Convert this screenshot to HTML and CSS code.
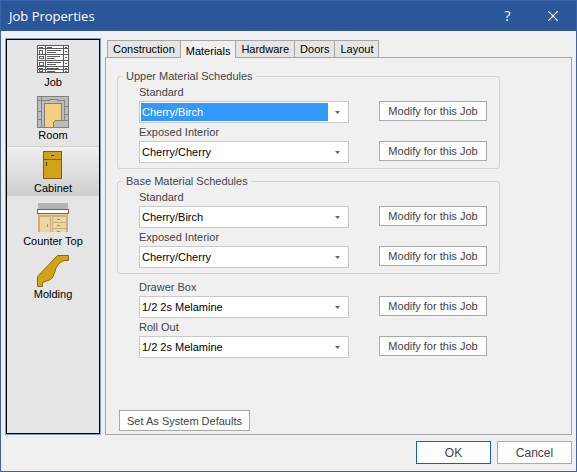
FILE: index.html
```html
<!DOCTYPE html>
<html lang="en">
<head>
<meta charset="utf-8">
<title>Job Properties</title>
<link rel="stylesheet" href="styles.css">
</head>
<body>
<div class="dialog">
  <header class="titlebar">
    <h1>Job Properties</h1>
    <button class="caption help" type="button" aria-label="Help">?</button>
    <button class="caption" type="button" aria-label="Close">
      <svg width="10" height="10" viewBox="0 0 10 10"><path d="M0 0L10 10M10 0L0 10" fill="none" stroke="#fff" stroke-width="1.2"/></svg>
    </button>
  </header>

  <div class="content">
    <nav class="sidebar">
      <button class="item" type="button">
        <svg width="32" height="32" viewBox="0 0 32 32" shape-rendering="crispEdges">
          <rect x="0.500" y="2.500" width="31" height="27" fill="#fff" stroke="#5c5c5c"/>
          <path d="M0 5.500H32M0 11.500H32M0 17.500H32M0 23.500H32M0 26.500H32M8.500 2V30M26.500 2V30M2 4.500H6M28 4.500H30M28 8.500H30M28 14.500H30M28 20.500H30M28 25.500H30M28 28.500H30M10 7.500H24M10 9.500H19M10 13.500H23M10 15.500H18M10 19.500H24M10 21.500H19M10 25.500H22M10 28.500H18M10 4.500H15" fill="none" stroke="#5c5c5c"/>
          <path d="M2.500 7.500H5.500V11.500H2.500ZM2.500 13.500H6.500V15.500H2.500ZM2.500 19.500H6.500V22.500H2.500ZM2.500 25.500H5.500V28.500H2.500Z" fill="none" stroke="#5c5c5c"/>
        </svg>
        <span>Job</span>
      </button>
      <button class="item" type="button">
        <svg width="32" height="32" viewBox="0 0 32 32" shape-rendering="crispEdges">
          <rect x="0.500" y="0.500" width="31" height="31" fill="#bcbcbc" stroke="#808080"/>
          <path d="M7.500 7.500H24.500V24.500H18.500L16.500 26.500V31.500H7.500Z" fill="#f2d080" stroke="#808080"/>
          <path d="M4.500 1V31M0 4.500H12V3.500H20V4.500H27.500V24M28 10.500H31M28 18.500H31M1 15.500H4M1 23.500H4M24 24.500H31" fill="none" stroke="#858585"/>
        </svg>
        <span>Room</span>
      </button>
      <button class="item selected" type="button" aria-current="page">
        <svg width="32" height="32" viewBox="0 0 32 32" shape-rendering="crispEdges">
          <rect x="6.500" y="2.500" width="18" height="27" fill="#d2a21b" stroke="#8b5a10"/>
          <path d="M6 10.500H25" stroke="#8b5a10"/>
          <path d="M14 6.500H17M9.500 13V17" stroke="#3c3020"/>
        </svg>
        <span>Cabinet</span>
      </button>
      <button class="item" type="button">
        <svg width="32" height="32" viewBox="0 0 32 32" shape-rendering="crispEdges">
          <path d="M1 1H31V7H1Z" fill="#b3b3b3"/>
          <path d="M1 12H31V30H1Z" fill="#ecd89f"/>
          <path d="M1.500 12V30M30.500 12V30M1 13.500H31M2.500 30V14.500H13.500V30M15.500 30V14.500H29.500V30M15 20.500H30M15 26.500H30" fill="none" stroke="#c9ae85"/>
          <path d="M20 17.500H23M20 23.500H23M20 29.500H23M10.500 22V25" stroke="#8e8e8e"/>
          <rect x="0.500" y="7.500" width="31" height="4" fill="#fff" stroke="#d33c22"/>
        </svg>
        <span>Counter Top</span>
      </button>
      <button class="item" type="button">
        <svg width="32" height="32" viewBox="0 0 32 32">
          <path d="M20.500 0.500H31.500V5.500H27Q19.500 8 17.500 18L15.500 22.500L13.500 24.500L5.500 27.500V31.500H0.500V21.500Z" fill="#d2a21b" stroke="#956510"/>
        </svg>
        <span>Molding</span>
      </button>
    </nav>

    <main class="pages">
      <div class="tabs" role="tablist">
        <button class="tab" type="button" role="tab">Construction</button>
        <button class="tab active" type="button" role="tab" aria-selected="true">Materials</button>
        <button class="tab" type="button" role="tab">Hardware</button>
        <button class="tab" type="button" role="tab">Doors</button>
        <button class="tab" type="button" role="tab">Layout</button>
      </div>
      <section class="panel" role="tabpanel">
        <fieldset class="group">
          <legend>Upper Material Schedules</legend>
          <div class="field">
            <label for="upper-standard">Standard</label>
            <div class="combo focused"><select id="upper-standard"><option>Cherry/Birch</option></select><svg class="arrow" viewBox="0 0 5 3"><path d="M0 0H5L2.500 3Z"/></svg></div>
            <button class="btn" type="button">Modify for this Job</button>
          </div>
          <div class="field">
            <label for="upper-interior">Exposed Interior</label>
            <div class="combo"><select id="upper-interior"><option>Cherry/Cherry</option></select><svg class="arrow" viewBox="0 0 5 3"><path d="M0 0H5L2.500 3Z"/></svg></div>
            <button class="btn" type="button">Modify for this Job</button>
          </div>
        </fieldset>
        <fieldset class="group">
          <legend>Base Material Schedules</legend>
          <div class="field">
            <label for="base-standard">Standard</label>
            <div class="combo"><select id="base-standard"><option>Cherry/Birch</option></select><svg class="arrow" viewBox="0 0 5 3"><path d="M0 0H5L2.500 3Z"/></svg></div>
            <button class="btn" type="button">Modify for this Job</button>
          </div>
          <div class="field">
            <label for="base-interior">Exposed Interior</label>
            <div class="combo"><select id="base-interior"><option>Cherry/Cherry</option></select><svg class="arrow" viewBox="0 0 5 3"><path d="M0 0H5L2.500 3Z"/></svg></div>
            <button class="btn" type="button">Modify for this Job</button>
          </div>
        </fieldset>
        <div class="extras">
          <div class="field">
            <label for="drawer-box">Drawer Box</label>
            <div class="combo"><select id="drawer-box"><option>1/2 2s Melamine</option></select><svg class="arrow" viewBox="0 0 5 3"><path d="M0 0H5L2.500 3Z"/></svg></div>
            <button class="btn" type="button">Modify for this Job</button>
          </div>
          <div class="field">
            <label for="roll-out">Roll Out</label>
            <div class="combo"><select id="roll-out"><option>1/2 2s Melamine</option></select><svg class="arrow" viewBox="0 0 5 3"><path d="M0 0H5L2.500 3Z"/></svg></div>
            <button class="btn" type="button">Modify for this Job</button>
          </div>
        </div>
        <button class="btn defaults" type="button">Set As System Defaults</button>
      </section>
    </main>
  </div>

  <footer class="actions">
    <button class="btn primary" type="button">OK</button>
    <button class="btn" type="button">Cancel</button>
  </footer>
</div>
</body>
</html>
```
FILE: styles.css
```css
* { box-sizing: border-box; }

body {
  margin: 0;
  font: 11px/14px "Liberation Sans", Arial, sans-serif;
  color: #444;
}

button, select {
  margin: 0;
  padding: 0;
  border: 0;
  border-radius: 0;
  background: none;
  font: inherit;
  color: inherit;
  white-space: nowrap;
}

.dialog {
  display: flex;
  flex-direction: column;
  min-height: 100vh;
  border: 1px solid #3c64a8;
  background: #f0f0f0;
}

.titlebar {
  display: flex;
  align-items: center;
  height: 30px;
  padding: 0 1px 0 8px;
  background: #2b579a;
  color: #fff;
}

.titlebar h1 {
  flex: 1;
  margin: 0;
  font: 13px/18px "Open Sans", sans-serif;
}

.caption {
  display: grid;
  place-items: center;
  width: 45px;
  height: 28px;
}

.help { font: 14px/18px "Open Sans", sans-serif; }

.content {
  flex: 1;
  display: flex;
  gap: 4px;
  padding: 7px 4px 0;
}

.sidebar {
  display: flex;
  flex-direction: column;
  gap: 3px;
  flex: 0 0 96px;
  border: 1px solid #78a0c0;
  box-shadow: inset 0 0 0 1px #000;
  background: #e5e5e5;
  color: #000;
}

.item {
  display: flex;
  flex-direction: column;
  align-items: center;
  height: 50px;
  margin: 0 1px;
  padding-top: 3px;
}

.item:first-child { margin-top: 1px; }

.item svg { flex: none; }

.item.selected {
  background: linear-gradient(#f0f0f0, #cecece);
  box-shadow: inset 0 1px #d0d0d0;
}

.pages {
  flex: 1;
  display: flex;
  flex-direction: column;
  padding-top: 2px;
}

.tabs {
  display: flex;
  padding-left: 2px;
  color: #000;
}

.tab {
  height: 17px;
  padding: 0 5px;
  border: 1px solid #a6a6a6;
  border-bottom: 0;
  background: #e5e5e5;
}

.tab + .tab { margin-left: -1px; }

.tab.active {
  z-index: 1;
  height: 18px;
  margin-bottom: -1px;
  padding-top: 2px;
  background: #f0f0f0;
}

.panel {
  flex: 1;
  display: flex;
  flex-direction: column;
  padding: 11px 11px 3px;
  border: 1px solid #a6a6a6;
}

.group {
  max-width: 383px;
  margin: 0;
  padding: 0 12px 5px 21px;
  border: 1px solid #d2d2d2;
  border-radius: 3px;
}

.group + .group { margin-top: 5px; }

legend {
  height: 14px;
  margin-left: -16px;
  padding: 0 3px;
}

.extras {
  max-width: 383px;
  margin-top: 4px;
  padding: 0 13px 0 22px;
}

.field {
  display: grid;
  grid-template-columns: 210px 108px;
  justify-content: space-between;
}

.field label {
  grid-column: 1 / -1;
  line-height: 18px;
}

.combo {
  display: flex;
  align-items: center;
  height: 22px;
  padding: 1px;
  border: 1px solid #cacaca;
  background: #fff;
  color: #000;
}

.combo select {
  flex: 1;
  height: 18px;
  padding-left: 1px;
  appearance: none;
}

.combo.focused select {
  outline: 1px dotted #d07020;
  outline-offset: -1px;
  background: #3399ff;
  color: #fff;
}

.arrow {
  width: 5px;
  height: 3px;
  margin: 0 7px;
  fill: #666;
}

.btn {
  height: 20px;
  border: 1px solid #a9a9a9;
  background: #fdfdfd;
}

.defaults {
  width: 131px;
  height: 21px;
  margin: auto 0 0 2px;
}

.actions {
  display: flex;
  justify-content: flex-end;
  gap: 6px;
  padding: 6px 4px 7px;
}

.actions .btn {
  width: 75px;
  height: 23px;
  font-size: 12px;
}

.actions .primary { border-color: #1060c0; }
```
